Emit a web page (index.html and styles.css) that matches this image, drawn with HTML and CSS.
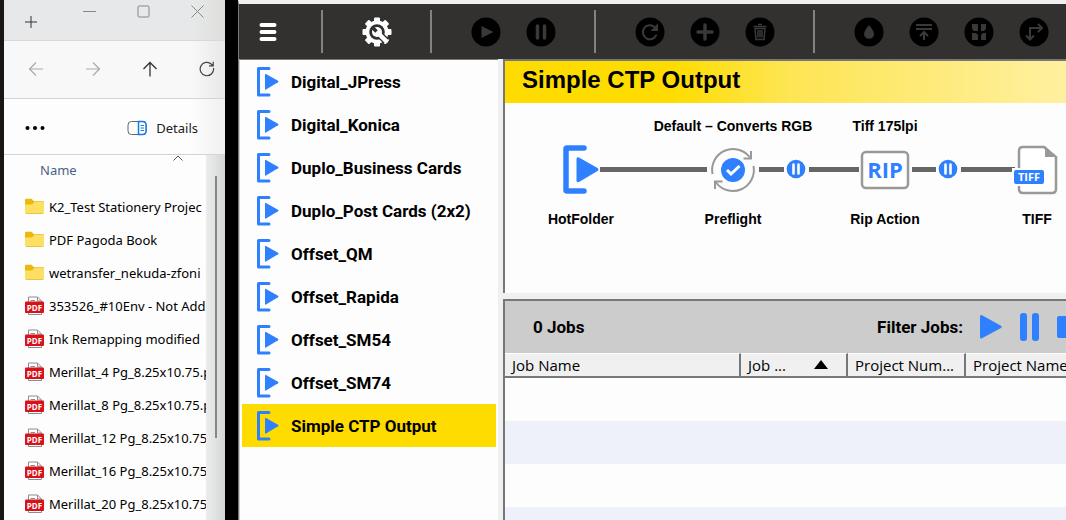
FILE: index.html
```html
<!DOCTYPE html>
<html lang="en">
<head>
<meta charset="utf-8">
<title>Simple CTP Output</title>
<link rel="stylesheet" href="styles.css">
</head>
<body>
<svg class="defs" aria-hidden="true">
  <symbol id="folder" viewBox="0 0 20 18">
    <path d="M0 2.200Q0 .8 1.400.8H6.500L9 3.200H17.600Q19 3.200 19 4.600V8H0Z" fill="#e9b90c"/>
    <path d="M0 6.500H7L9.500 4H17.600Q19 4 19 5.400V14.600Q19 16 17.600 16H1.400Q0 16 0 14.600Z" fill="#fde063"/>
    <path d="M1 15.500H18" stroke="#e8c344"/>
  </symbol>
  <symbol id="pdf" viewBox="0 0 20 20">
    <path d="M3.500 18.500V1H12.500L16.500 5V18.500Z" fill="#fff" stroke="#8c8c8c"/>
    <path d="M12.500 1V5H16.500M5.500 4.500H10" fill="none" stroke="#8c8c8c"/>
    <rect x="0" y="5.500" width="19" height="11.500" rx="1" fill="#d9121a"/>
    <text x="9.500" y="14.500" text-anchor="middle" class="pdf-text">PDF</text>
  </symbol>
  <symbol id="hot" viewBox="0 0 36 50">
    <path d="M21 3H4Q3 3 3 4V45Q3 46 4 46H21" fill="none" stroke="#2f80ff" stroke-width="5.500" stroke-linecap="round"/>
    <path d="M13.500 14Q13.500 11.500 16 12.500L34.500 23Q36.500 24.500 34.500 26L16 37Q13.500 38 13.500 35.500Z" fill="#2f80ff"/>
  </symbol>
  <symbol id="hot-small" viewBox="0 0 22 30">
    <path d="M12 1.500H1.500V28H12" fill="none" stroke="#2f80ff" stroke-width="3" stroke-linecap="round" stroke-linejoin="round"/>
    <path d="M8 7.500Q8 6.500 9 7L21 13.800Q22 14.500 21 15.200L9 22.500Q8 23 8 22Z" fill="#2f80ff"/>
  </symbol>
  <symbol id="hold" viewBox="0 0 20 20">
    <circle cx="10" cy="10" r="9.300" fill="#2f80ff"/>
    <path d="M7.500 5.500V14.500M12.500 5.500V14.500" stroke="#fff" stroke-width="2.600" stroke-linecap="round"/>
  </symbol>
</svg>

<div class="desktop">
  <section class="explorer" aria-label="File explorer">
    <div class="tabs">
      <button class="ico-btn new-tab" aria-label="New tab"><svg width="12" height="12"><path d="M6 0V12M0 6H12" stroke="#333"/></svg></button>
      <div class="win-buttons">
        <button class="ico-btn" aria-label="Minimize"><svg width="13" height="13"><path d="M0 6.500H13" stroke="#888"/></svg></button>
        <button class="ico-btn" aria-label="Maximize"><svg width="13" height="13"><rect x="1" y="1" width="11" height="11" rx="1" fill="none" stroke="#888"/></svg></button>
        <button class="ico-btn" aria-label="Close"><svg width="13" height="13"><path d="M.5.5L12.500 12.500M12.500.5L.5 12.500" stroke="#888"/></svg></button>
      </div>
    </div>
    <div class="nav">
      <button class="ico-btn" aria-label="Back"><svg width="16" height="16"><path d="M15 8H1.500M8 1.500L1.500 8L8 14.500" fill="none" stroke="#aaa" stroke-width="1.200"/></svg></button>
      <button class="ico-btn" aria-label="Forward"><svg width="16" height="16"><path d="M1 8H14.500M8 1.500L14.500 8L8 14.500" fill="none" stroke="#aaa" stroke-width="1.200"/></svg></button>
      <button class="ico-btn" aria-label="Up"><svg width="16" height="16"><path d="M8 15.500V1.500M1.500 8L8 1.500L14.500 8" fill="none" stroke="#333" stroke-width="1.300"/></svg></button>
      <button class="ico-btn" aria-label="Refresh"><svg width="16" height="16"><path d="M14.500 7A6.700 6.700 0 1 1 12.500 3.200L14 4.500M14.200.8V4.800H10" fill="none" stroke="#444" stroke-width="1.200"/></svg></button>
    </div>
    <div class="commands">
      <button class="ico-btn" aria-label="See more"><svg width="20" height="6"><circle cx="2.500" cy="3" r="2"/><circle cx="10" cy="3" r="2"/><circle cx="17.500" cy="3" r="2"/></svg></button>
      <button class="details">
        <svg width="20" height="16"><rect x="1" y="1.500" width="18" height="13" rx="3.500" fill="#fff" stroke="#666"/><path d="M11.500 1.500H15.500Q19 1.500 19 5V11Q19 14.500 15.500 14.500H11.500Z" fill="#fff" stroke="#1677e6" stroke-width="1.500"/><path d="M13.500 5.500H17M13.500 8H17M13.500 10.500H17" stroke="#1677e6"/></svg>
        Details
      </button>
    </div>
    <div class="files">
      <div class="file-pane">
        <button class="name-head">Name<svg width="10" height="6"><path d="M.5 5.500L5 1L9.500 5.500" fill="none" stroke="#555"/></svg></button>
        <ul class="file-list">
          <li><svg class="file-ico"><use href="#folder"/></svg>K2_Test Stationery Projec</li>
          <li><svg class="file-ico"><use href="#folder"/></svg>PDF Pagoda Book</li>
          <li><svg class="file-ico"><use href="#folder"/></svg>wetransfer_nekuda-zfoni</li>
          <li><svg class="file-ico"><use href="#pdf"/></svg>353526_#10Env - Not Add</li>
          <li><svg class="file-ico"><use href="#pdf"/></svg>Ink Remapping modified</li>
          <li><svg class="file-ico"><use href="#pdf"/></svg>Merillat_4 Pg_8.25x10.75.p</li>
          <li><svg class="file-ico"><use href="#pdf"/></svg>Merillat_8 Pg_8.25x10.75.p</li>
          <li><svg class="file-ico"><use href="#pdf"/></svg>Merillat_12 Pg_8.25x10.75</li>
          <li><svg class="file-ico"><use href="#pdf"/></svg>Merillat_16 Pg_8.25x10.75</li>
          <li><svg class="file-ico"><use href="#pdf"/></svg>Merillat_20 Pg_8.25x10.75</li>
        </ul>
      </div>
      <div class="scroll"><span class="thumb"></span></div>
    </div>
  </section>

  <main class="app">
    <div class="toolbar">
      <button class="tool" aria-label="Menu"><svg width="18" height="20"><path d="M2.500 3H15.500M2.500 10H15.500M2.500 17H15.500" stroke="#fff" stroke-width="4" stroke-linecap="round"/></svg></button>
      <span class="divider"></span>
      <button class="tool" aria-label="Settings"><svg width="30" height="30" viewBox="-15 -15 30 30">
        <g fill="#fff"><circle r="11.500"/><g id="teeth"><rect x="-3" y="-14.500" width="6" height="29" rx="1"/><rect x="-14.500" y="-3" width="29" height="6" rx="1"/></g><use href="#teeth" transform="rotate(45)"/></g>
        <circle r="7.800" fill="#333130"/>
        <path d="M1 1L9 9" stroke="#333130" stroke-width="7"/>
        <path d="M0 0L9 9" stroke="#fff" stroke-width="4.500" stroke-linecap="round"/>
        <circle r="5" fill="#fff"/>
        <path d="M-.5-.5L-5-5" stroke="#333130" stroke-width="3.500"/>
      </svg></button>
      <span class="divider"></span>
      <button class="tool" aria-label="Run"><svg class="disc" viewBox="-15 -15 30 30"><circle r="14.500"/><path class="fill" d="M-4.500-6L7.500 0L-4.500 6Z"/></svg></button>
      <button class="tool" aria-label="Pause"><svg class="disc" viewBox="-15 -15 30 30"><circle r="14.500"/><path class="line" d="M-3.500-6V6M3.500-6V6"/></svg></button>
      <span class="divider"></span>
      <button class="tool" aria-label="Restart"><svg class="disc" viewBox="-15 -15 30 30"><circle r="14.500"/><path class="line thin" d="M6.500 2.500A7 7 0 1 1 4.500-5"/><path class="fill" d="M8-8.500V-1H.5Z"/></svg></button>
      <button class="tool" aria-label="Add"><svg class="disc" viewBox="-15 -15 30 30"><circle r="14.500"/><path class="line" d="M0-7V7M-7 0H7"/></svg></button>
      <button class="tool" aria-label="Delete"><svg class="disc" viewBox="-15 -15 30 30"><circle r="14.500"/><path class="line fine" d="M-6.500-5.500H6.500M-2-7.500H2M-5-3.500L-4 7.500H4L5-3.500ZM-2-2V5.500M0-2V5.500M2-2V5.500"/></svg></button>
      <span class="divider"></span>
      <button class="tool" aria-label="Ink"><svg class="disc" viewBox="-15 -15 30 30"><circle r="14.500"/><path class="fill" d="M0-7Q5-1 5 2A5 4.800 0 0 1-5 2Q-5-1 0-7Z"/></svg></button>
      <button class="tool" aria-label="Send to top"><svg class="disc" viewBox="-15 -15 30 30"><circle r="14.500"/><path class="line thin" d="M-8-7H8M-8-3H8M0 8V0M-4 4L0 0L4 4"/></svg></button>
      <button class="tool" aria-label="Imposition"><svg class="disc" viewBox="-15 -15 30 30"><circle r="14.500"/><path class="fill" d="M-7-8H-1V-1H-5L-7-3ZM2-8H7V-3L5-1H2ZM-7 1H-3L-1 3V8H-7ZM2 3L4 1H7V8H2Z"/></svg></button>
      <button class="tool" aria-label="Route"><svg class="disc" viewBox="-15 -15 30 30"><circle r="14.500"/><path class="line thin" d="M-4 7V-4H8M-8 3.500L-4 7.500L0 3.500M4-8L8-4L4 0"/></svg></button>
    </div>

    <div class="work">
      <nav class="flows" aria-label="Workflows">
        <button class="flow"><svg><use href="#hot-small"/></svg>Digital_JPress</button>
        <button class="flow"><svg><use href="#hot-small"/></svg>Digital_Konica</button>
        <button class="flow"><svg><use href="#hot-small"/></svg>Duplo_Business Cards</button>
        <button class="flow"><svg><use href="#hot-small"/></svg>Duplo_Post Cards (2x2)</button>
        <button class="flow"><svg><use href="#hot-small"/></svg>Offset_QM</button>
        <button class="flow"><svg><use href="#hot-small"/></svg>Offset_Rapida</button>
        <button class="flow"><svg><use href="#hot-small"/></svg>Offset_SM54</button>
        <button class="flow"><svg><use href="#hot-small"/></svg>Offset_SM74</button>
        <button class="flow selected"><svg><use href="#hot-small"/></svg>Simple CTP Output</button>
      </nav>

      <div class="right">
        <section class="panel diagram">
          <h1>Simple CTP Output</h1>
          <div class="canvas">
            <span class="link link-1"></span>
            <span class="link link-2"></span>
            <span class="link link-3"></span>
            <span class="link link-4"></span>
            <span class="link link-5"></span>
            <div class="node hotfolder">
              <span class="cap"></span>
              <svg width="36" height="50"><use href="#hot"/></svg>
              <span class="cap">HotFolder</span>
            </div>
            <div class="node preflight">
              <span class="cap">Default – Converts RGB</span>
              <svg width="50" height="50" viewBox="-25 -25 50 50">
                <circle r="12" fill="#2f80ff"/>
                <path d="M-6 0L-2 4L6.500-4" fill="none" stroke="#fff" stroke-width="3"/>
                <path d="M-20.500 4A21 21 0 0 1 17-12.500M20.500-4A21 21 0 0 1-17 12.500" fill="none" stroke="#999" stroke-width="2"/>
                <path d="M18-19V-11.500H10.500M-18 19V11.500H-10.500" fill="none" stroke="#999" stroke-width="2"/>
              </svg>
              <span class="cap">Preflight</span>
            </div>
            <svg class="hold hold-1"><use href="#hold"/></svg>
            <div class="node rip">
              <span class="cap">Tiff 175lpi</span>
              <svg width="50" height="50"><rect x="2" y="7" width="46" height="36" rx="4" fill="#fff" stroke="#999" stroke-width="2.500"/><text x="25" y="33" text-anchor="middle" class="rip-text">RIP</text></svg>
              <span class="cap">Rip Action</span>
            </div>
            <svg class="hold hold-2"><use href="#hold"/></svg>
            <div class="node tiff">
              <span class="cap"></span>
              <svg width="50" height="50" viewBox="2 0 50 50">
                <path d="M13 2H34L46 12V44Q46 48 42 48H13Q9 48 9 44V6Q9 2 13 2Z" fill="#fff" stroke="#999" stroke-width="2.500"/>
                <path d="M35 1V12H46Z" fill="#999"/>
                <rect x="2" y="23" width="34" height="18" fill="#fff"/>
                <rect x="4" y="25" width="30" height="14" rx="2" fill="#2f80ff"/>
                <text x="19" y="36" text-anchor="middle" class="tiff-text">TIFF</text>
              </svg>
              <span class="cap">TIFF</span>
            </div>
          </div>
        </section>

        <section class="panel jobs">
          <div class="jobs-head">
            <h2>0 Jobs</h2>
            <div class="filters">
              <span>Filter Jobs:</span>
              <button class="ico-btn" aria-label="Running"><svg width="24" height="30"><path d="M1 4.500Q1 2.500 3 3.300L22 13.800Q23.500 15 22 16L3 26.300Q1 27 1 25Z" fill="#2f80ff"/></svg></button>
              <button class="ico-btn" aria-label="Paused"><svg width="22" height="30"><rect x="1" y="1" width="7" height="28" rx="3" fill="#2f80ff"/><rect x="13" y="1" width="7" height="28" rx="3" fill="#2f80ff"/></svg></button>
              <button class="ico-btn" aria-label="Stopped"><svg width="22" height="30"><rect y="4" width="22" height="22" rx="2" fill="#2f80ff"/></svg></button>
            </div>
          </div>
          <table>
            <colgroup><col class="c-name"><col class="c-job"><col class="c-num"><col></colgroup>
            <thead><tr>
              <th>Job Name</th>
              <th><div class="sort">Job ...<svg width="14" height="10"><path d="M0 9L7 0L14 9Z"/></svg></div></th>
              <th>Project Num...</th>
              <th>Project Name</th>
            </tr></thead>
            <tbody>
              <tr><td colspan="4"></td></tr>
              <tr><td colspan="4"></td></tr>
              <tr><td colspan="4"></td></tr>
              <tr><td colspan="4"></td></tr>
            </tbody>
          </table>
        </section>
      </div>
    </div>
  </main>
</div>
</body>
</html>
```
FILE: styles.css
```css
* { box-sizing: border-box; }

body {
  margin: 0;
  background: #000;
  color: #000;
  font-family: "Open Sans", "Noto Sans", sans-serif;
  font-size: 15px;
}

button {
  padding: 0;
  border: 0;
  background: none;
  color: inherit;
  font: inherit;
}

svg { display: block; flex: none; }
.defs { position: absolute; width: 0; height: 0; }
.pdf-text { font: bold 8px "Open Sans", sans-serif; fill: #fff; }
.rip-text { font: bold 22px "Open Sans", sans-serif; fill: #2f80ff; }
.tiff-text { font: bold 11px "Open Sans", sans-serif; fill: #fff; }

.desktop {
  display: flex;
  gap: 13px;
  height: 100vh;
  overflow: hidden;
}

/* File explorer */
.explorer {
  display: flex;
  flex: none;
  flex-direction: column;
  width: 225px;
  border-left: 4px solid #191613;
  background: #fdfdfd;
  font-family: "Noto Sans", sans-serif;
  font-size: 13px;
}

.tabs {
  display: flex;
  flex: none;
  align-items: flex-start;
  justify-content: space-between;
  height: 41px;
  padding: 5px 21px 0;
  border-bottom: 1px solid #d8d8d8;
  background: linear-gradient(90deg, #e7e8e9 85%, #dededc);
}
.new-tab { padding-top: 11px; }
.win-buttons { display: flex; gap: 41px; }

.nav {
  display: flex;
  flex: none;
  align-items: center;
  justify-content: space-between;
  height: 58px;
  padding: 0 10px 2px 24px;
  border-bottom: 1px solid #d4d4d4;
  background: linear-gradient(90deg, #f8f8f8 85%, #e8e8e8);
}

.commands {
  display: flex;
  flex: none;
  align-items: center;
  justify-content: space-between;
  height: 56px;
  padding: 2px 27px 0 21px;
  border-bottom: 1px solid #d4d4d4;
  background: linear-gradient(90deg, #fdfdfd 85%, #f0f0f0);
}
.details { display: flex; align-items: center; gap: 9px; color: #222; }

.files { display: flex; flex: 1; min-height: 0; }
.file-pane { flex: 1; min-width: 0; overflow: hidden; }
.name-head {
  display: flex;
  align-items: center;
  width: 100%;
  height: 35px;
  padding: 0 0 5px 36px;
  gap: 96px;
  color: #4a6184;
}
.name-head svg { align-self: flex-start; }
.file-list { margin: 0; padding: 0 0 0 21px; list-style: none; }
.file-list li {
  display: flex;
  align-items: center;
  gap: 4px;
  height: 33px;
  white-space: nowrap;
}
.file-ico { width: 20px; height: 20px; }

.scroll {
  display: flex;
  justify-content: center;
  width: 19px;
  padding-top: 21px;
  background: linear-gradient(90deg, #ececec, #e0e2e3 50%, #d4d4d4);
}
.thumb { width: 2px; height: 262px; background: #868686; }

/* Workflow application */
.app {
  display: flex;
  flex: 1;
  flex-direction: column;
  min-width: 0;
  border-top: 4px solid #f0f0f0;
  border-left: 1px solid #777;
  background: #f0f0f0;
}

.toolbar {
  display: flex;
  flex: none;
  height: 55px;
  padding-left: 1px;
  overflow: hidden;
  background: #333130;
}
.tool {
  display: flex;
  flex: none;
  align-items: center;
  justify-content: center;
  width: 55px;
}
.divider {
  flex: none;
  width: 2px;
  height: 43px;
  margin: 6px 26px;
  background: #828286;
}
.disc { width: 30px; height: 30px; }
.disc .fill { fill: #3b3937; }
.disc .line { fill: none; stroke: #3b3937; stroke-width: 3.500px; stroke-linecap: round; }
.disc .thin { stroke-width: 2px; stroke-linecap: butt; }
.disc .fine { stroke-width: 1.500px; stroke-linecap: butt; }

.work { display: flex; flex: 1; gap: 5px; min-height: 0; }

.flows {
  flex: none;
  width: 259px;
  padding: 0 2px;
  border-top: 1px solid #777;
  border-left: 1px solid #ccc;
  background: #fdfdfd;
}
.flow {
  display: flex;
  align-items: center;
  gap: 12px;
  width: 100%;
  height: 43px;
  padding-left: 15px;
  font: bold 17px Roboto, sans-serif;
  white-space: nowrap;
}
.flow svg { width: 22px; height: 30px; }
.selected { background: #ffdc00; }

.right {
  display: flex;
  flex: 1;
  flex-direction: column;
  gap: 6px;
  min-width: 0;
}
.panel {
  overflow: hidden;
  border-top: 2px solid #777;
  border-left: 2px solid #777;
  background: #fdfdfd;
}
.diagram { flex: none; }
.diagram h1 {
  margin: 0;
  padding: 5px 17px 9px;
  background: linear-gradient(90deg, #ffdc00 30%, #fde552 50%, #fff0a0);
  font: bold 24px/28px "Liberation Sans", Arial, sans-serif;
}

/* Node graph: every item has its own place on the canvas */
.canvas {
  position: relative;
  height: 190px;
  font: bold 14px/16px "Liberation Sans", Arial, sans-serif;
}
.node {
  position: absolute;
  top: 15px;
  display: flex;
  flex-direction: column;
  align-items: center;
  gap: 11px;
  width: 170px;
}
.node .cap { min-height: 16px; white-space: nowrap; }
.node .cap:last-child { margin-top: 5px; }
.hotfolder { left: -9px; }
.preflight { left: 143px; }
.rip { left: 295px; }
.tiff { left: 447px; }
.link { position: absolute; top: 64px; height: 5px; background: #666; }
.link-1 { left: 95px; width: 107px; }
.link-2 { left: 254px; width: 25px; }
.link-3 { left: 304px; width: 50px; }
.link-4 { left: 407px; width: 24px; }
.link-5 { left: 456px; width: 54px; }
.hold { position: absolute; top: 56px; width: 20px; height: 20px; }
.hold-1 { left: 281px; }
.hold-2 { left: 433px; }

/* Jobs */
.jobs { flex: 1; min-height: 0; }
.jobs-head {
  display: flex;
  align-items: center;
  justify-content: space-between;
  height: 52px;
  padding-left: 28px;
  background: #ccc;
  font: bold 17px Roboto, sans-serif;
  white-space: nowrap;
}
.jobs-head h2 { margin: 0; font: inherit; }
.filters {
  display: flex;
  align-items: center;
  gap: 16px;
  margin-right: -13px;
}

table { width: 100%; border-collapse: separate; border-spacing: 0; table-layout: fixed; }
.c-name { width: 236px; }
.c-job { width: 107px; }
.c-num { width: 118px; }
th {
  height: 25px;
  padding: 0 0 0 7px;
  overflow: hidden;
  border-top: 1px solid #fff;
  border-right: 2px solid #777;
  border-bottom: 2px solid #777;
  background: #f0f0f0;
  font-weight: normal;
  line-height: 20px;
  text-align: left;
  white-space: nowrap;
}
th:last-child { border-right: 0; }
.sort { display: flex; align-items: center; gap: 28px; }
td { height: 43px; padding: 0; }
tbody tr:nth-child(even) { background: #eef1f9; }
```
